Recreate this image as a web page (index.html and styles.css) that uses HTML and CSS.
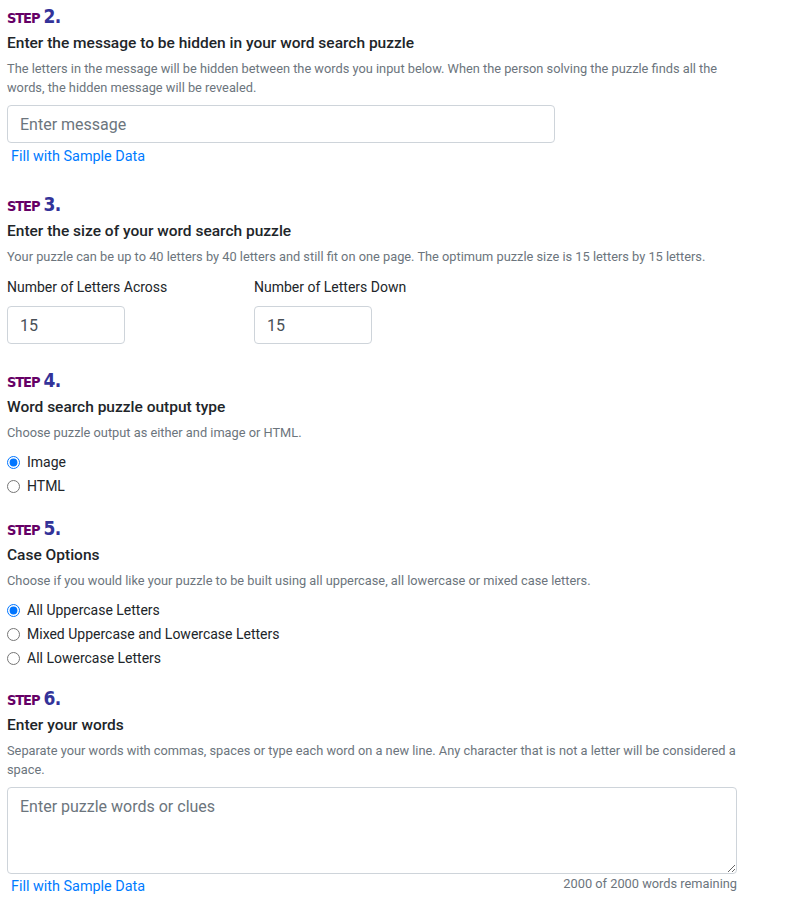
FILE: index.html
```html
<!DOCTYPE html>
<html lang="en">
<head>
<meta charset="utf-8">
<title>Word Search Puzzle</title>
<link rel="stylesheet" href="styles.css">
</head>
<body>
<main class="form">
  <section class="section s2">
    <div class="step"><span class="step-word">STEP</span> <span class="step-num">2.</span></div>
    <h3 class="title">Enter the message to be hidden in your word search puzzle</h3>
    <p class="desc">The letters in the message will be hidden between the words you input below. When the person solving the puzzle finds all the words, the hidden message will be revealed.</p>
    <input class="control message" type="text" placeholder="Enter message">
    <a class="sample" href="#">Fill with Sample Data</a>
  </section>

  <section class="section s3">
    <div class="step"><span class="step-word">STEP</span> <span class="step-num">3.</span></div>
    <h3 class="title">Enter the size of your word search puzzle</h3>
    <p class="desc">Your puzzle can be up to 40 letters by 40 letters and still fit on one page. The optimum puzzle size is 15 letters by 15 letters.</p>
    <div class="size-row">
      <div class="size-group">
        <label class="label">Number of Letters Across</label>
        <input class="control small" type="text" value="15">
      </div>
      <div class="size-group">
        <label class="label">Number of Letters Down</label>
        <input class="control small" type="text" value="15">
      </div>
    </div>
  </section>

  <section class="section s4">
    <div class="step"><span class="step-word">STEP</span> <span class="step-num">4.</span></div>
    <h3 class="title">Word search puzzle output type</h3>
    <p class="desc">Choose puzzle output as either and image or HTML.</p>
    <div class="radios">
      <label class="radio"><input type="radio" name="out" checked> Image</label>
      <label class="radio"><input type="radio" name="out"> HTML</label>
    </div>
  </section>

  <section class="section s5">
    <div class="step"><span class="step-word">STEP</span> <span class="step-num">5.</span></div>
    <h3 class="title">Case Options</h3>
    <p class="desc">Choose if you would like your puzzle to be built using all uppercase, all lowercase or mixed case letters.</p>
    <div class="radios">
      <label class="radio"><input type="radio" name="case" checked> All Uppercase Letters</label>
      <label class="radio"><input type="radio" name="case"> Mixed Uppercase and Lowercase Letters</label>
      <label class="radio"><input type="radio" name="case"> All Lowercase Letters</label>
    </div>
  </section>

  <section class="section s6">
    <div class="step"><span class="step-word">STEP</span> <span class="step-num">6.</span></div>
    <h3 class="title">Enter your words</h3>
    <p class="desc">Separate your words with commas, spaces or type each word on a new line. Any character that is not a letter will be considered a space.</p>
    <textarea class="control words" placeholder="Enter puzzle words or clues"></textarea>
    <div class="words-foot">
      <a class="sample" href="#">Fill with Sample Data</a>
      <span class="remaining">2000 of 2000 words remaining</span>
    </div>
  </section>
</main>
</body>
</html>
```

FILE: styles.css
```css
* { box-sizing: border-box; }

html, body {
  margin: 0;
  padding: 0;
  background: #fff;
}

body {
  font-family: Roboto, "Liberation Sans", Arial, sans-serif;
  color: #212529;
}

.form {
  width: 737px;
  padding: 6px 0 0 7px;
}

.section { display: flex; flex-direction: column; }
.s2 { margin-bottom: 28px; }
.s3 { margin-bottom: 26px; }
.s4 { margin-bottom: 20px; }
.s5 { margin-bottom: 18px; }

.step {
  font-family: "DejaVu Sans", sans-serif;
  font-stretch: condensed;
  font-weight: bold;
  line-height: 20px;
  height: 20px;
  white-space: nowrap;
}
.step-word {
  font-size: 14.5px;
  color: #660066;
  letter-spacing: -1.1px;
}
.step-num {
  font-size: 19px;
  color: #333399;
  margin-left: -1px;
  letter-spacing: -0.5px;
}

.title {
  margin: 5px 0 0;
  font-size: 15.5px;
  line-height: 24px;
  font-weight: 500;
  color: #212529;
}

.desc {
  margin: 4px 0 0;
  font-size: 12.8px;
  line-height: 19px;
  color: #6c757d;
}

.control {
  font-family: Roboto, "Liberation Sans", Arial, sans-serif;
  font-size: 16px;
  color: #495057;
  border: 1px solid #ced4da;
  border-radius: 4px;
  background: #fff;
  padding: 6px 12px;
  outline: none;
}
.control::placeholder { color: #6c757d; }

.message {
  margin-top: 8px;
  width: 548px;
  height: 38px;
}

.sample {
  font-size: 14.4px;
  line-height: 19px;
  color: #007bff;
  text-decoration: none;
  margin-left: 4px;
}
.s2 .sample { margin-top: 4px; align-self: flex-start; }

.size-row {
  display: flex;
  gap: 12px;
  margin-top: 11px;
}
.size-group {
  display: flex;
  flex-direction: column;
  width: 235px;
}
.label {
  font-size: 14px;
  line-height: 21px;
  color: #212529;
}
.small {
  margin-top: 8px;
  width: 118px;
  height: 38px;
}

.radios {
  margin-top: 8px;
  display: flex;
  flex-direction: column;
}
.radio {
  display: flex;
  align-items: center;
  height: 24px;
  font-size: 14px;
  color: #212529;
}
.radio input {
  margin: 0 7px 0 0;
  width: 13px;
  height: 13px;
}

.words {
  margin-top: 8px;
  width: 730px;
  height: 87px;
  resize: vertical;
  display: block;
  padding: 9px 12px;
}

.words-foot {
  display: flex;
  justify-content: space-between;
  align-items: flex-start;
  width: 730px;
  margin-top: 3px;
}
.remaining {
  font-size: 12.8px;
  line-height: 16px;
  color: #6c757d;
  margin-top: -1px;
}
```
